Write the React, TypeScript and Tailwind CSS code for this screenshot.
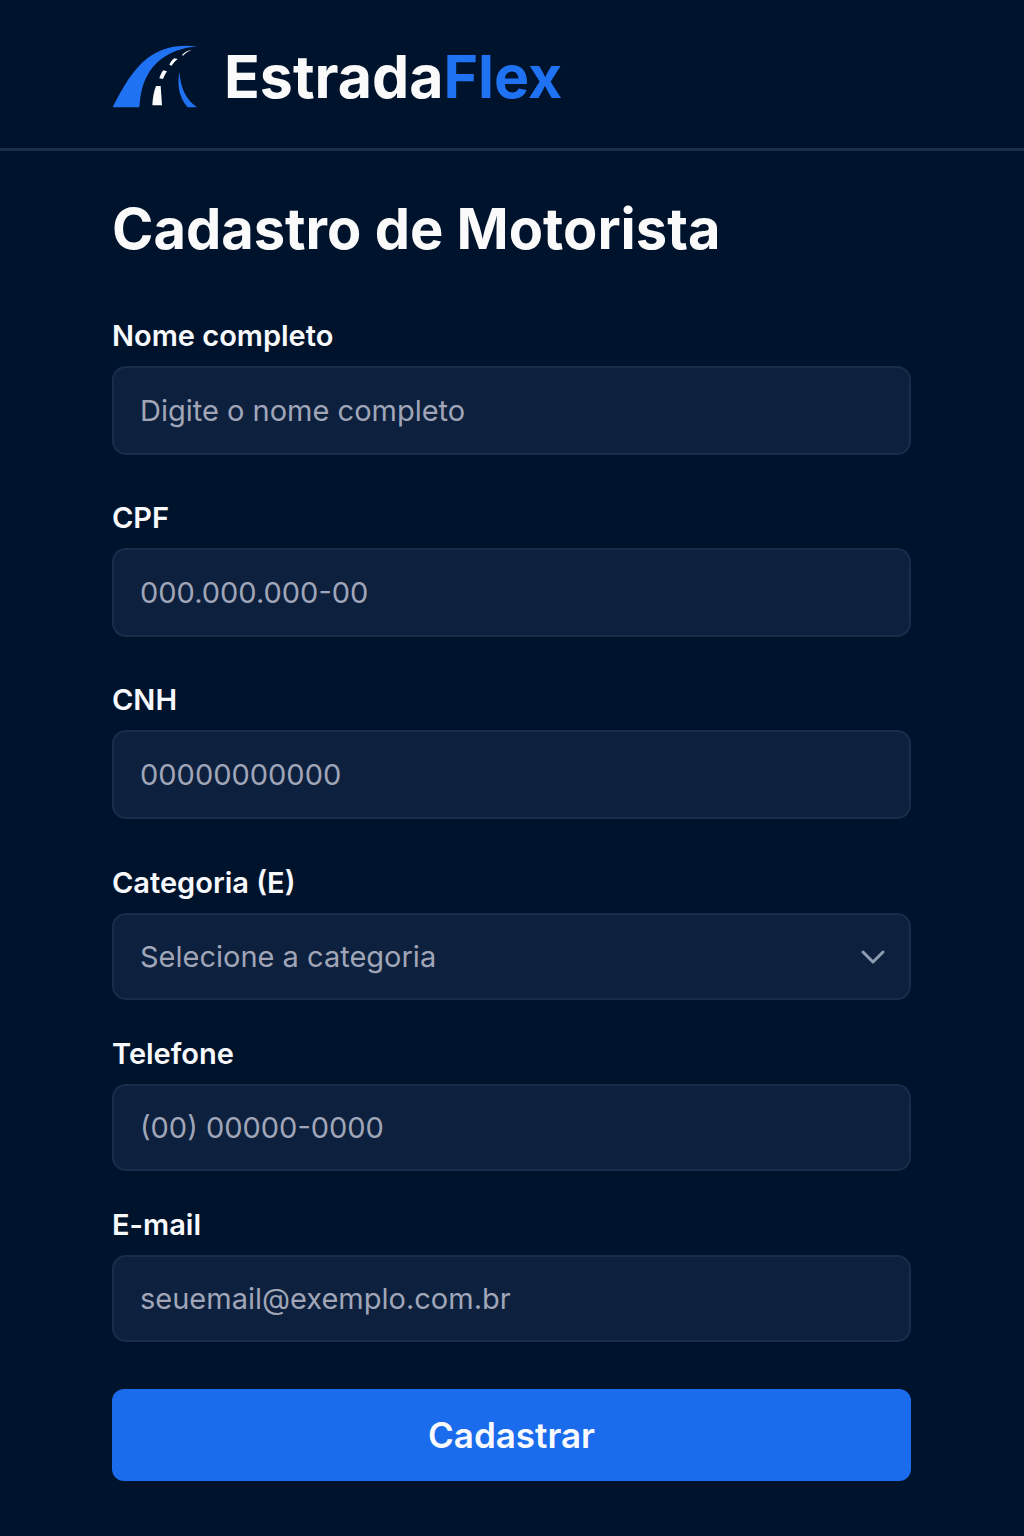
import { useState } from "react";

type Field = {
  id: string;
  label: string;
  placeholder: string;
  type: string;
};

const documentFields: Field[] = [
  { id: "nome", label: "Nome completo", placeholder: "Digite o nome completo", type: "text" },
  { id: "cpf", label: "CPF", placeholder: "000.000.000-00", type: "text" },
  { id: "cnh", label: "CNH", placeholder: "00000000000", type: "text" },
];

const contactFields: Field[] = [
  { id: "telefone", label: "Telefone", placeholder: "(00) 00000-0000", type: "tel" },
  { id: "email", label: "E-mail", placeholder: "seuemail@exemplo.com.br", type: "email" },
];

const labelClass = "mb-3 block text-[29px] leading-[37px] font-semibold text-[#f8f9fc]";
const controlClass =
  "block w-full rounded-[14px] border-2 border-[#1b2c4a] bg-[#0d203e] px-[26px] text-[29px] outline-none focus:border-[#1b6eee]";

function RoadLogo() {
  return (
    <svg viewBox="36 42 261 189" className="mb-[2px] h-[63px] w-[87px] shrink-0" aria-hidden="true">
      <path
        d="M38 229C66 172 99 116 142 82C180 52 229 39 293 46C218 53 173 83 145 128C127 157 121 190 118 229Z"
        fill="#1f72f2"
      />
      <path d="M238 123C232 160 235 196 263 229H292C259 207 243 176 238 123Z" fill="#1f72f2" />
      <path d="M168 165H182L186 223H157C158 202 161 182 168 165Z" fill="#fafafa" />
      <path d="M190 118L201 121C196 128 192 136 189 144L178 142C181 133 184 125 190 118Z" fill="#fafafa" />
      <path d="M223 82L233 84C226 90 220 96 215 104L208 101C212 93 216 87 223 82Z" fill="#fafafa" />
      <path d="M275 56C265 60 256 66 249 74L246 72C254 63 264 58 275 56Z" fill="#fafafa" />
    </svg>
  );
}

function TextField({ field, size }: { field: Field; size: string }) {
  return (
    <div>
      <label htmlFor={field.id} className={labelClass}>
        {field.label}
      </label>
      <input
        id={field.id}
        name={field.id}
        type={field.type}
        placeholder={field.placeholder}
        className={`${controlClass} ${size} text-white placeholder:text-[#a0a6b8]`}
      />
    </div>
  );
}

export default function App() {
  const [category, setCategory] = useState("");

  return (
    <div className="min-h-screen bg-[#00132d] font-['Inter',sans-serif]">
      <header className="flex items-center gap-[25px] border-b-[3px] border-[#1d2d4b] px-28 pt-[37px] pb-[31px]">
        <RoadLogo />
        <span className="text-[59px] leading-[80px] font-bold text-[#fafafa]">
          Estrada<span className="text-[#1f72f2]">Flex</span>
        </span>
      </header>

      <main className="pt-10 pr-[113px] pb-[54px] pl-28">
        <h1 className="text-[56px] leading-[76px] font-bold text-[#fafafa]">Cadastro de Motorista</h1>

        <form className="mt-[50px]" onSubmit={(event) => event.preventDefault()}>
          <div className="flex flex-col gap-11">
            {documentFields.map((field) => (
              <TextField key={field.id} field={field} size="h-[89px]" />
            ))}
          </div>

          <div className="mt-[45px] flex flex-col gap-[35px]">
            <div>
              <label htmlFor="categoria" className={labelClass}>
                Categoria (E)
              </label>
              <div className="relative">
                <select
                  id="categoria"
                  name="categoria"
                  value={category}
                  onChange={(event) => setCategory(event.target.value)}
                  className={`${controlClass} h-[87px] appearance-none ${category ? "text-white" : "text-[#a0a6b8]"}`}
                >
                  <option value="">Selecione a categoria</option>
                  <option value="E">E</option>
                </select>
                <svg
                  viewBox="0 0 24 16"
                  className="pointer-events-none absolute top-9 right-[26px] h-4 w-6"
                  fill="none"
                  stroke="#8f9bb0"
                  strokeWidth="3"
                  strokeLinecap="round"
                  strokeLinejoin="round"
                  aria-hidden="true"
                >
                  <path d="M2 3L12 13L22 3" />
                </svg>
              </div>
            </div>
            {contactFields.map((field) => (
              <TextField key={field.id} field={field} size="h-[87px]" />
            ))}
          </div>

          <button
            type="submit"
            className="mt-[47px] block h-[92px] w-full rounded-xl bg-[#1a6cec] text-[35px] font-semibold text-[#f8faff]"
          >
            Cadastrar
          </button>
        </form>
      </main>
    </div>
  );
}
